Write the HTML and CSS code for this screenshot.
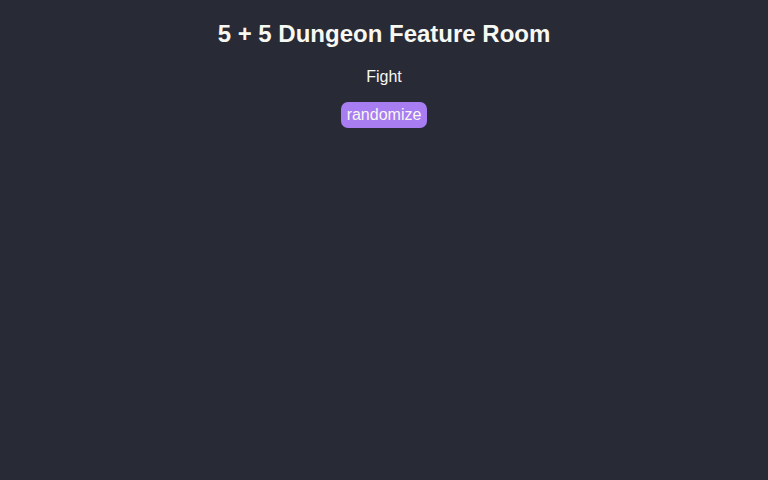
FILE: index.html
```html
<!DOCTYPE html>
<html lang="en">
<head>
  <meta charset="UTF-8">
  <meta name="viewport" content="width=device-width, initial-scale=1.0">
  <title>5 + 5 Dungeon Feature Room</title>
  <link rel="stylesheet" href="styles.css">
</head>
<body>
  <div class="room">
    <h1 class="title">5 + 5 Dungeon Feature Room</h1>
    <p class="feature">Fight</p>
    <button class="randomize-button">randomize</button>
  </div>
</body>
</html>
```

FILE: styles.css
```css
* {
  margin: 0;
  padding: 0;
  box-sizing: border-box;
}

body, html {
  width: 100%;
  height: 100%;
  background: #282a36;
  color: #f8f8f2;
  font-family: "Liberation Sans", Arial, sans-serif;
}

.room {
  display: flex;
  flex-direction: column;
  align-items: center;
  padding-top: 20px;
}

.title {
  font-size: 24px;
  font-weight: bold;
  line-height: 28px;
}

/* feature text */
.feature {
  margin-top: 20px;
  font-size: 16px;
  line-height: 18px;
}

.randomize-button {
  margin-top: 16px;
  padding: 4px 6px;
  background: #a97df2;
  color: #f8f8f2;
  border: none;
  border-radius: 7px;
  font-family: inherit;
  font-size: 16px;
  line-height: 18px;
  cursor: pointer;
}
```
